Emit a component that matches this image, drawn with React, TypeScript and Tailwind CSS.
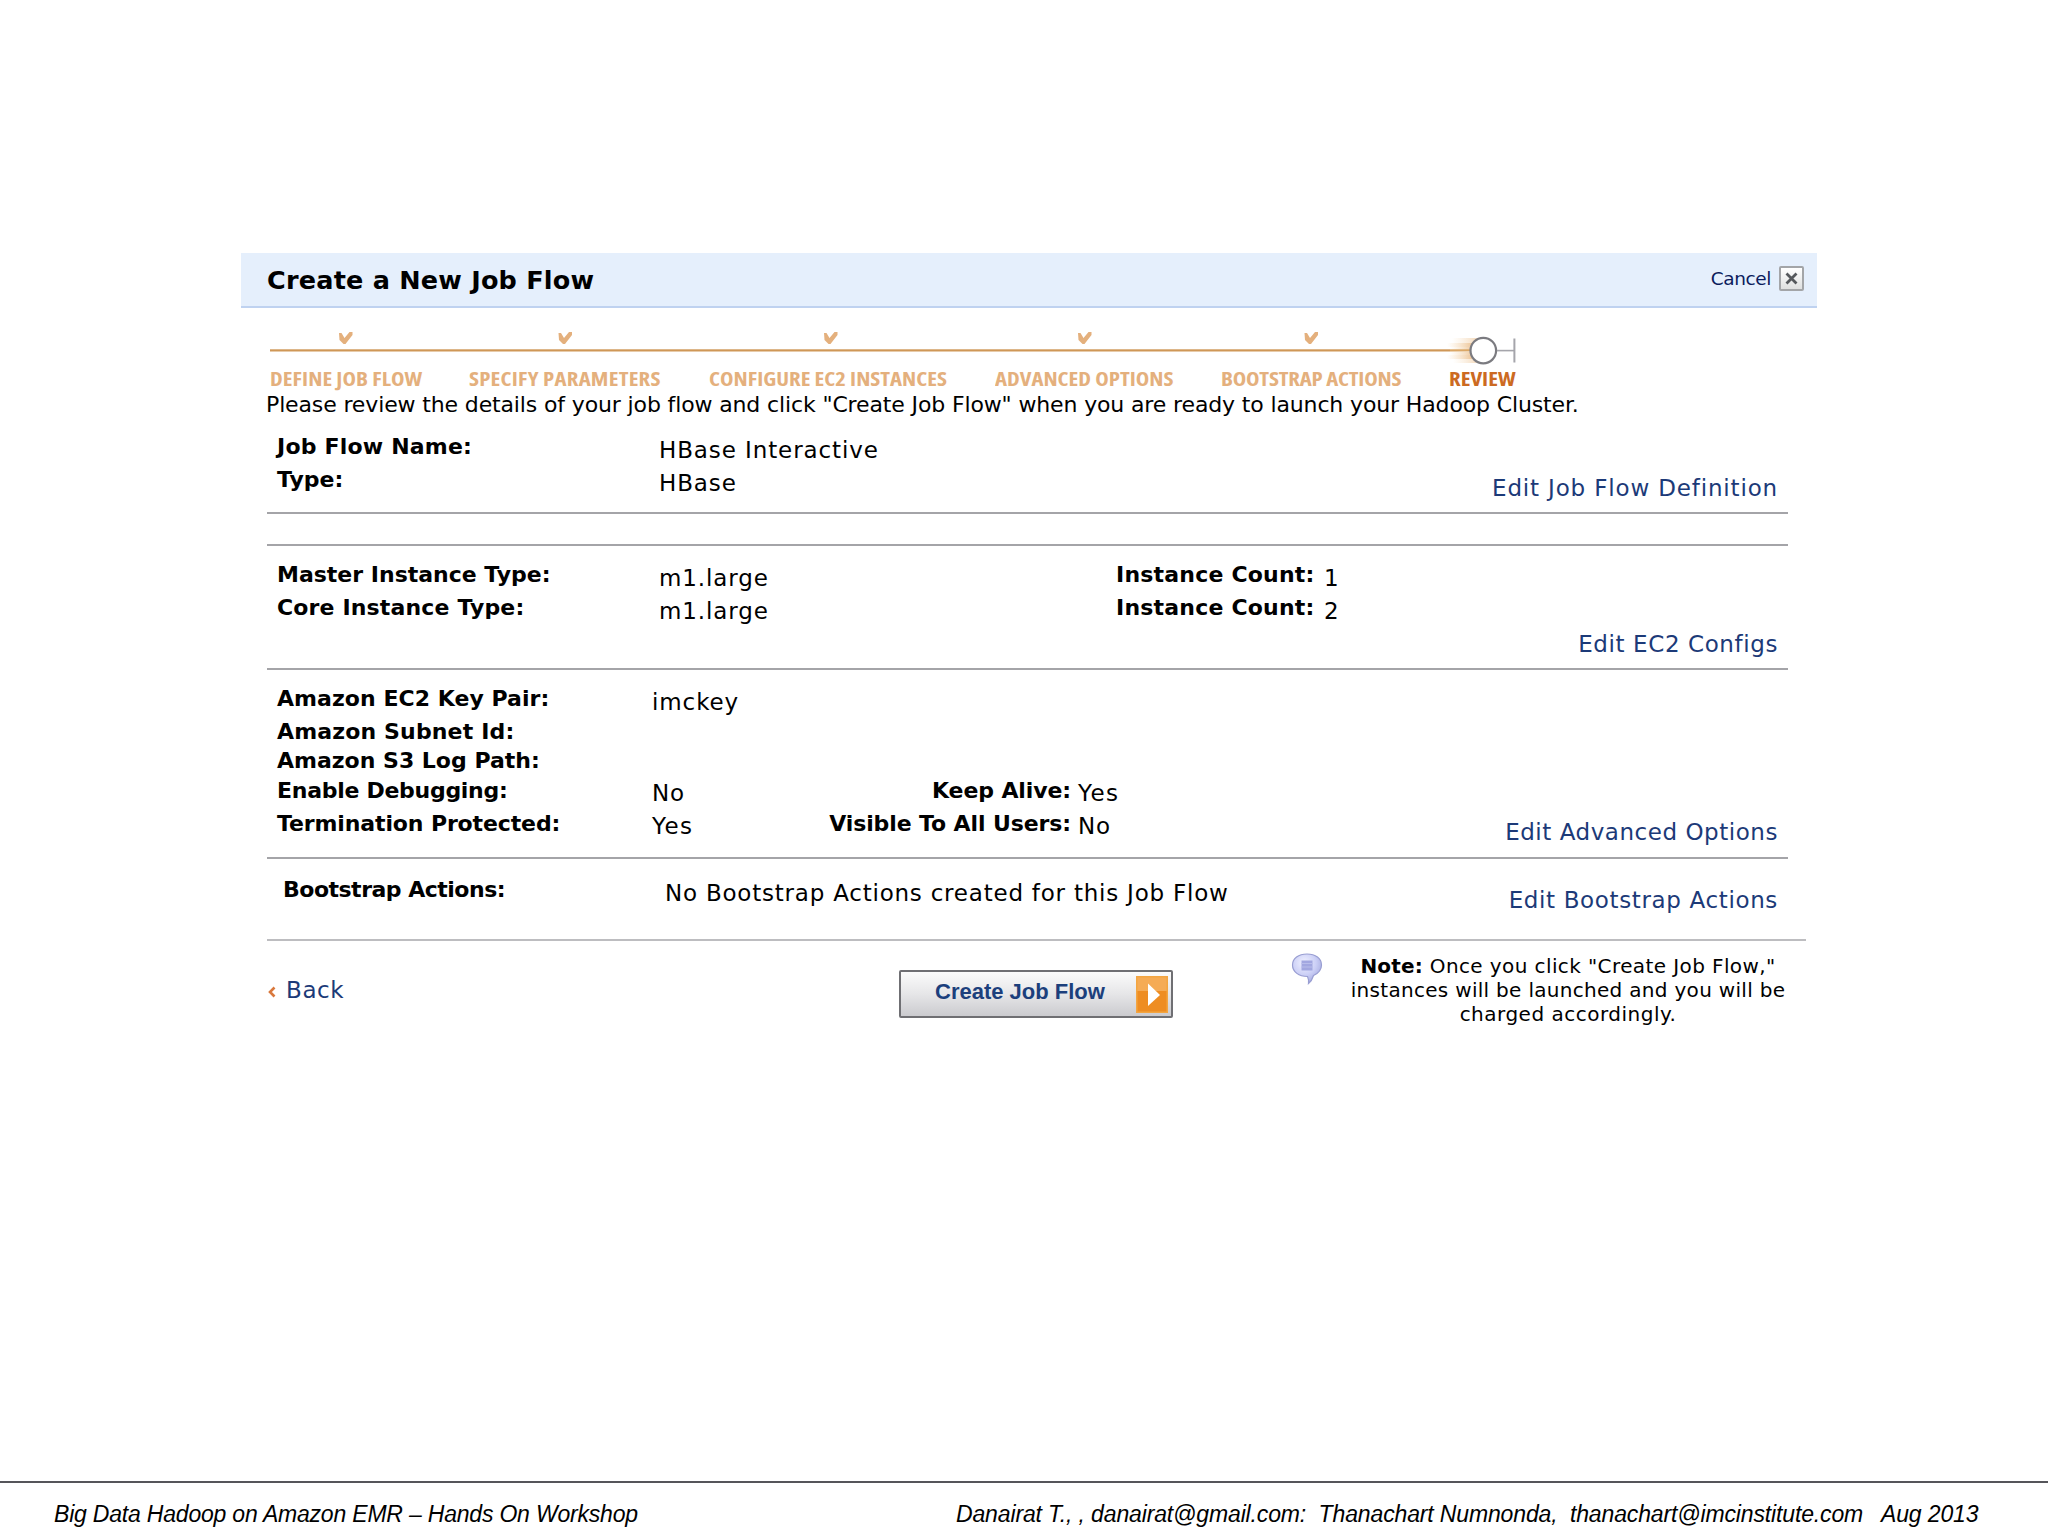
import type { ReactNode } from 'react';

const steps = [
  { label: 'DEFINE JOB FLOW', width: 'w-[199px]', tracking: 'tracking-[0.05px]' },
  { label: 'SPECIFY PARAMETERS', width: 'w-[240px]', tracking: 'tracking-[0.2px]' },
  { label: 'CONFIGURE EC2 INSTANCES', width: 'w-[286px]', tracking: '' },
  { label: 'ADVANCED OPTIONS', width: 'w-[226px]', tracking: '' },
  { label: 'BOOTSTRAP ACTIONS', width: 'w-[228px]', tracking: 'tracking-[-0.2px]' },
];

const checkOffsets = [72, 291.5, 557, 811, 1037.5];

function Stepper() {
  return (
    <div className="ml-[26px] h-[82px]">
      <svg className="block" width="1300" height="59" viewBox="0 0 1300 59">
        <defs>
          <linearGradient id="trail" x1="0" x2="1" y1="0" y2="0">
            <stop offset="0" stopColor="#f3c98f" stopOpacity="0" />
            <stop offset="1" stopColor="#e3a662" stopOpacity="0.75" />
          </linearGradient>
        </defs>
        <rect x="3" y="41.3" width="1180" height="2.2" fill="#cf9757" />
        {checkOffsets.map((x) => (
          <path
            key={x}
            transform={`translate(${x} 24)`}
            d="M0 1 L2.5 1 L5.5 6 L10.5 0 L13.5 0 L13.5 3 L6.5 12 L4.5 12 L0.5 8 Z"
            fill="#e4b07d"
          />
        ))}
        <rect x="1185" y="30" width="26" height="5" fill="url(#trail)" opacity="0.6" />
        <rect x="1180" y="35" width="25" height="4" fill="url(#trail)" opacity="0.85" />
        <rect x="1183" y="39" width="22" height="3" fill="url(#trail)" opacity="0.8" />
        <rect x="1183" y="41.3" width="20" height="2.2" fill="#dba766" />
        <rect x="1183" y="44" width="22" height="3" fill="url(#trail)" opacity="0.8" />
        <rect x="1180" y="47" width="25" height="4" fill="url(#trail)" opacity="0.85" />
        <rect x="1186" y="51" width="26" height="4" fill="url(#trail)" opacity="0.6" />
        <circle cx="1216.3" cy="42.6" r="12.8" fill="#fff" stroke="#7b7b80" strokeWidth="2.2" />
        <rect x="1230" y="41.8" width="17" height="1.6" fill="#a5a5ab" />
        <rect x="1246.4" y="30.5" width="2" height="24" fill="#a5a5ab" />
      </svg>
      <div className="flex pl-[2.5px] text-[20px] leading-6 font-bold whitespace-nowrap text-[#e4b07d] font-['Open_Sans',sans-serif] [font-stretch:75%]">
        {steps.map((s) => (
          <div key={s.label} className={`origin-left scale-x-[1.14] ${s.width} ${s.tracking}`}>
            {s.label}
          </div>
        ))}
        <div className="origin-left scale-x-[1.14] text-[#cc6a22]">REVIEW</div>
      </div>
    </div>
  );
}

function Label({ children, className = '' }: { children?: ReactNode; className?: string }) {
  return <div className={`h-[33px] text-[22px] leading-[33px] font-bold ${className}`}>{children}</div>;
}

function Value({ children, className = 'tracking-[0.9px]' }: { children?: ReactNode; className?: string }) {
  return <div className={`h-[33px] text-[23px] leading-[33px] ${className}`}>{children}</div>;
}

function EditLink({ children, className = '' }: { children: ReactNode; className?: string }) {
  return (
    <a href="#" className={`ml-auto self-end text-[23px] leading-8 text-[#1c3a78] ${className}`}>
      {children}
    </a>
  );
}

function NoteBubble() {
  return (
    <svg className="mt-[12px] ml-[118px] block shrink-0" width="32" height="32" viewBox="0 0 32 32">
      <defs>
        <radialGradient id="bubble" cx="0.4" cy="0.3" r="0.75">
          <stop offset="0" stopColor="#f0f1ff" />
          <stop offset="0.55" stopColor="#cbcff6" />
          <stop offset="1" stopColor="#a0a5dc" />
        </radialGradient>
      </defs>
      <path
        d="M16 1 C24.5 1 30.5 5.5 30.5 12 C30.5 17 27 20.5 22.5 22.5 C21.5 26 20 28.5 17.5 30.5 C17.8 28 17.5 25.5 16.5 23.5 C8 23.5 1.5 19 1.5 12 C1.5 5.5 7.5 1 16 1 Z"
        fill="url(#bubble)"
        stroke="#999ed2"
        strokeWidth="1.2"
      />
      <rect x="10.5" y="7.5" width="11" height="10" fill="#a2a7e0" />
      <path d="M10.5 10.5h11M10.5 14h11" stroke="#b9bdea" strokeWidth="1" />
    </svg>
  );
}

export default function App() {
  return (
    <div className="flex h-[1536px] w-[2048px] flex-col overflow-hidden bg-white whitespace-nowrap text-black font-['DejaVu_Sans',sans-serif]">
      <main className="mt-[253px] ml-[241px] w-[1576px] flex-1">
        <header className="flex h-[55px] items-center justify-between border-b-2 border-[#bfd2f0] bg-[#e5effc] pr-[13px] pl-[26px]">
          <h1 className="pt-px text-[25.5px] font-bold tracking-[0.22px]">Create a New Job Flow</h1>
          <div className="flex items-center gap-2">
            <span className="pb-px text-[18.5px] tracking-[-0.4px] text-[#0c1c5c]">Cancel</span>
            <button className="mb-0.5 flex size-[25px] items-center justify-center rounded-[2px] border-2 border-[#a3a5a8] bg-linear-to-b from-white to-[#dfe0e0]">
              <svg width="13" height="13" viewBox="0 0 13 13">
                <path d="M1.5 1.5l10 10M11.5 1.5l-10 10" stroke="#55585c" strokeWidth="2.8" />
              </svg>
            </button>
          </div>
        </header>

        <Stepper />

        <p className="ml-[25px] h-7 pt-px text-[22px] leading-7 tracking-[-0.135px]">
          Please review the details of your job flow and click "Create Job Flow" when you are ready to launch your Hadoop Cluster.
        </p>

        <section className="ml-[26px] flex h-[96px] w-[1521px] border-b-2 border-[#a4a4a8] pt-3 pr-[10px] pl-[10px]">
          <div className="w-[382px]">
            <Label className="tracking-[0.2px]">Job Flow Name:</Label>
            <Label>Type:</Label>
          </div>
          <div className="pt-1">
            <Value>HBase Interactive</Value>
            <Value>HBase</Value>
          </div>
          <EditLink className="mb-2 tracking-[0.84px]">Edit Job Flow Definition</EditLink>
        </section>

        <section className="mt-[30px] ml-[26px] flex h-[126px] w-[1521px] border-y-2 border-[#a4a4a8] pt-3 pr-[10px] pl-[10px]">
          <div className="w-[382px]">
            <Label>Master Instance Type:</Label>
            <Label className="tracking-[0.15px]">Core Instance Type:</Label>
          </div>
          <div className="w-[457px] pt-1">
            <Value>m1.large</Value>
            <Value>m1.large</Value>
          </div>
          <div className="w-[208px] tracking-[0.2px]">
            <Label>Instance Count:</Label>
            <Label>Instance Count:</Label>
          </div>
          <div className="pt-1">
            <Value>1</Value>
            <Value>2</Value>
          </div>
          <EditLink className="mb-2 tracking-[0.6px]">Edit EC2 Configs</EditLink>
        </section>

        <section className="ml-[26px] flex h-[189px] w-[1521px] border-b-2 border-[#a4a4a8] pt-3 pr-[10px] pl-[10px]">
          <div className="w-[375px]">
            <Label className="tracking-[0.05px]">Amazon EC2 Key Pair:</Label>
            <Label className="tracking-[0.15px]">Amazon Subnet Id:</Label>
            <Label className="-my-1">Amazon S3 Log Path:</Label>
            <Label className="pt-px tracking-[-0.28px]">Enable Debugging:</Label>
            <Label className="pt-px tracking-[-0.12px]">Termination Protected:</Label>
          </div>
          <div className="w-[170px] pt-1">
            <Value>imckey</Value>
            <Value className="mt-[58px] tracking-[0.9px]">No</Value>
            <Value className="tracking-[1.4px]">Yes</Value>
          </div>
          <div className="w-[249px] pt-[92px] text-right tracking-[-0.1px]">
            <Label>Keep Alive:</Label>
            <Label>Visible To All Users:</Label>
          </div>
          <div className="pt-[95px] pl-[7px]">
            <Value className="tracking-[1.4px]">Yes</Value>
            <Value>No</Value>
          </div>
          <EditLink className="mb-[9px] tracking-[0.54px]">Edit Advanced Options</EditLink>
        </section>

        <section className="ml-[26px] flex h-[82px] w-[1539px] border-b-2 border-[#bdbdc0] pt-[13px] pr-[28px] pl-4">
          <Label className="w-[382px] pt-px tracking-[-0.5px]">Bootstrap Actions:</Label>
          <Value className="pt-[5px] tracking-[0.78px]">No Bootstrap Actions created for this Job Flow</Value>
          <EditLink className="mb-[23px] tracking-[0.64px]">Edit Bootstrap Actions</EditLink>
        </section>

        <div className="ml-[26px] flex items-start">
          <a href="#" className="mt-[33px] flex w-[632px] items-center gap-[10px] text-[23px] leading-8 tracking-[0.6px] text-[#1c3a78]">
            <svg className="mt-[3px]" width="9" height="12" viewBox="0 0 9 12">
              <path d="M7.5 1.5L3 6l4.5 4.5" fill="none" stroke="#d9783c" strokeWidth="2.6" />
            </svg>
            Back
          </a>
          <button className="mt-[29px] flex h-[48px] w-[274px] shrink-0 items-center rounded-[2px] border-2 border-[#6f6f73] bg-linear-to-b from-[#fbfbfb] via-[#e6e6e8] to-[#cbcbcf] pl-[34px] text-[22px] font-bold text-[#1c3f7c] font-['Liberation_Sans',sans-serif]">
            <span className="w-[201px] pb-[5px] text-left">Create Job Flow</span>
            <svg width="32" height="37" viewBox="0 0 32 37">
              <rect width="32" height="37" fill="#ee8d22" />
              <rect width="32" height="15" fill="#f5ab55" />
              <rect x="0.75" y="0.75" width="30.5" height="35.5" fill="none" stroke="#f3a541" strokeWidth="1.5" />
              <path d="M12 7.5L24 19L12 30Z" fill="#fff" />
            </svg>
          </button>
          <NoteBubble />
          <p className="mt-[13px] ml-[17px] w-[456px] text-center text-[20px] leading-6">
            <span className="tracking-[0.4px]">
              <b className="tracking-[0.2px]">Note:</b> Once you click "Create Job Flow,"
            </span>
            <br />
            <span className="tracking-[0.3px]">instances will be launched and you will be</span>
            <br />
            <span className="tracking-[0.5px]">charged accordingly.</span>
          </p>
        </div>
      </main>

      <footer className="flex h-[55px] items-start border-t-2 border-[#55555a] pt-[15px] text-[23px] leading-8 italic font-['Liberation_Sans',sans-serif]">
        <span className="w-[902px] pl-[54px] tracking-[-0.2px]">Big Data Hadoop on Amazon EMR – Hands On Workshop</span>
        <span className="pl-[54px] whitespace-pre tracking-[-0.14px]">
          {'Danairat T., , danairat@gmail.com:  Thanachart Numnonda,  thanachart@imcinstitute.com   Aug 2013'}
        </span>
      </footer>
    </div>
  );
}
